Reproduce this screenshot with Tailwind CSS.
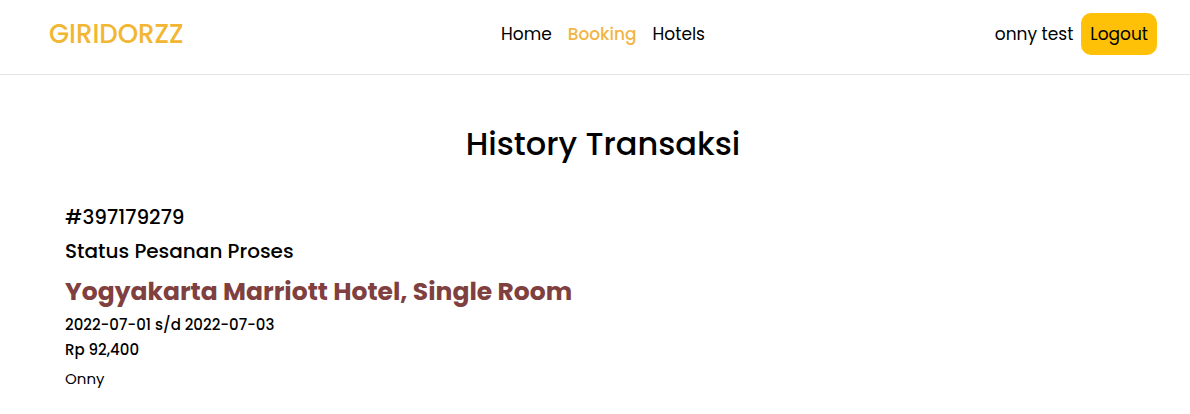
<!DOCTYPE html>
<html lang="id">
<head>
<meta charset="utf-8">
<meta name="viewport" content="width=device-width, initial-scale=1">
<title>Giridorzz - Booking</title>
<script src="https://cdn.jsdelivr.net/npm/@tailwindcss/browser@4"></script>
</head>
<body class="bg-white font-[Poppins,Inter,sans-serif] text-black">
<header class="border-b border-[#e4e4e4] pt-[13px] pr-[33px] pb-[19px] pl-[49px]">
  <div class="grid grid-cols-[1fr_auto_1fr] items-center">
    <a href="#" class="justify-self-start text-[26px] leading-[42px] font-medium text-[#f2b632]">GIRIDORZZ</a>
    <nav class="flex gap-4 text-[17px] leading-6">
      <a href="#">Home</a>
      <a href="#" aria-current="page" class="font-medium text-[#f2b544]">Booking</a>
      <a href="#">Hotels</a>
    </nav>
    <div class="flex items-center gap-2 justify-self-end text-[17px] leading-6">
      <span>onny test</span>
      <button type="button" class="rounded-[10px] bg-[#ffc107] px-[9px] py-[9px]">Logout</button>
    </div>
  </div>
</header>
<main class="pt-12 pr-[33px] pl-[49px]">
  <h1 class="text-center text-[32px] leading-[42px] font-medium">History Transaksi</h1>
  <article class="flex flex-col items-start px-4 pt-[35px]">
    <h2 class="text-[20px] leading-[34px] font-medium">#397179279</h2>
    <p class="text-[20px] leading-[34px] font-medium">Status Pesanan Proses</p>
    <h3 class="pt-1 text-[25px] leading-10 font-bold text-[#804040]">Yogyakarta Marriott Hotel, Single Room</h3>
    <p class="text-[15px] leading-[25px] font-medium">2022-07-01 s/d 2022-07-03</p>
    <p class="text-[15px] leading-[26px] font-medium">Rp 92,400</p>
    <p class="text-[15px] leading-8">Onny</p>
  </article>
</main>
</body>
</html>
